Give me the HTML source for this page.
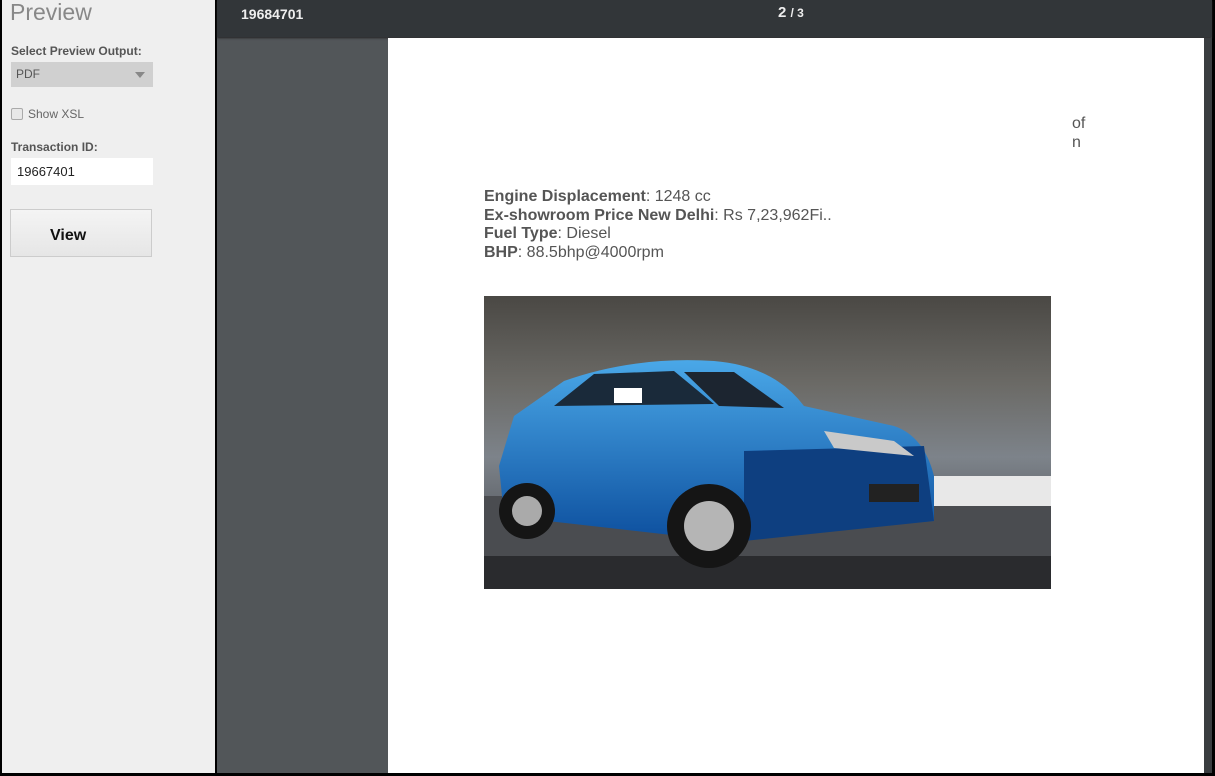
<!DOCTYPE html>
<html><head><style>
body{margin:0;width:1215px;height:776px;background:#000;position:relative;overflow:hidden;font-family:"Liberation Sans",Arial,sans-serif}
.side{position:absolute;left:2px;top:0;width:213px;height:773px;background:#efefef}
.main{position:absolute;left:217px;top:0;width:995px;height:773px;background:#525659}
.bar{position:absolute;left:217px;top:0;width:995px;height:37px;background:#323639;box-shadow:0 1px 2px #222}
.page{position:absolute;left:388px;top:38px;width:816px;height:735px;background:#fff}
.t{position:absolute;color:#555;font-size:16px;line-height:18.5px}
.t b{color:#555}
</style></head><body>
<div class="side">
<div style="position:absolute;left:8px;top:-1px;font-size:23px;color:#888">Preview</div>
<div style="position:absolute;left:9px;top:44px;font-size:12px;font-weight:bold;color:#555">Select Preview Output:</div>
<div style="position:absolute;left:9px;top:62px;width:142px;height:25px;background:#d0d0d0;font-size:12px;color:#555;line-height:25px;text-indent:5px">PDF<div style="position:absolute;right:8px;top:10px;border:5px solid transparent;border-top:6px solid #888;border-bottom:0"></div></div>
<div style="position:absolute;left:9px;top:108px;width:10px;height:10px;border:1px solid #aaa;background:#e8e8e8;border-radius:2px"></div>
<div style="position:absolute;left:26px;top:107px;font-size:12px;color:#666">Show XSL</div>
<div style="position:absolute;left:9px;top:140px;font-size:12px;font-weight:bold;color:#555">Transaction ID:</div>
<div style="position:absolute;left:9px;top:158px;width:142px;height:27px;background:#fff;font-size:13px;color:#222;line-height:27px;text-indent:6px">19667401</div>
<div style="position:absolute;left:8px;top:209px;width:140px;height:46px;border:1px solid #ccc;background:linear-gradient(#f4f4f4,#e6e6e6);font-size:16px;font-weight:bold;color:#111"><span style="position:absolute;left:39px;top:17px">View</span></div>
</div>
<div class="main"></div>
<div class="bar">
<div style="position:absolute;left:24px;top:6px;font-size:14px;font-weight:bold;color:#eee">19684701</div>
<div style="position:absolute;left:561px;top:4px;font-size:15px;font-weight:bold;color:#eee">2 <span style="font-size:12px">/ 3</span></div>
</div>
<div style="position:absolute;left:1204px;top:38px;width:8px;height:735px;background:#3a3d40"></div>
<div class="page">
<div class="t" style="left:684px;top:77px">of<br>n</div>
<div class="t" style="left:96px;top:150px"><b>Engine Displacement</b>: 1248 cc<br><b>Ex-showroom Price New Delhi</b>: Rs 7,23,962Fi..<br><b>Fuel Type</b>: Diesel<br><b>BHP</b>: 88.5bhp@4000rpm</div>
<svg style="position:absolute;left:96px;top:258px" width="567" height="293" viewBox="0 0 567 293">
<defs>
<linearGradient id="bg" x1="0" y1="0" x2="0" y2="1"><stop offset="0" stop-color="#4a4844"/><stop offset=".3" stop-color="#6b6a66"/><stop offset=".55" stop-color="#7d838a"/><stop offset="1" stop-color="#3b3d42"/></linearGradient>
<linearGradient id="bl" x1="0" y1="0" x2="0" y2="1"><stop offset="0" stop-color="#4aa8e8"/><stop offset="1" stop-color="#0d4f9e"/></linearGradient>
</defs>
<rect width="567" height="293" fill="url(#bg)"/>
<rect x="0" y="200" width="567" height="93" fill="#4a4c50"/>
<rect x="440" y="180" width="127" height="30" fill="#e8e8e8"/>
<rect x="0" y="260" width="567" height="33" fill="#2a2b2e"/>
<path d="M30 120 L80 85 Q150 60 230 65 Q290 70 320 110 L410 130 Q440 140 450 180 L450 225 L240 245 L20 220 L15 170 Z" fill="url(#bl)"/>
<path d="M70 110 L110 78 L190 75 L230 108 Z" fill="#1a2a3a"/>
<path d="M200 76 L250 76 L300 112 L235 110 Z" fill="#1c2530"/>
<path d="M260 155 L440 150 L450 225 L260 245 Z" fill="#0e3f80"/>
<path d="M340 135 L410 145 L430 160 L350 152 Z" fill="#c9c9c9"/>
<circle cx="43" cy="215" r="28" fill="#151515"/><circle cx="43" cy="215" r="15" fill="#aaa"/>
<circle cx="225" cy="230" r="42" fill="#151515"/><circle cx="225" cy="230" r="25" fill="#b5b5b5"/>
<rect x="385" y="188" width="50" height="18" fill="#222"/>
<rect x="130" y="92" width="28" height="15" fill="#fff"/>
</svg>
</div>
</body></html>
